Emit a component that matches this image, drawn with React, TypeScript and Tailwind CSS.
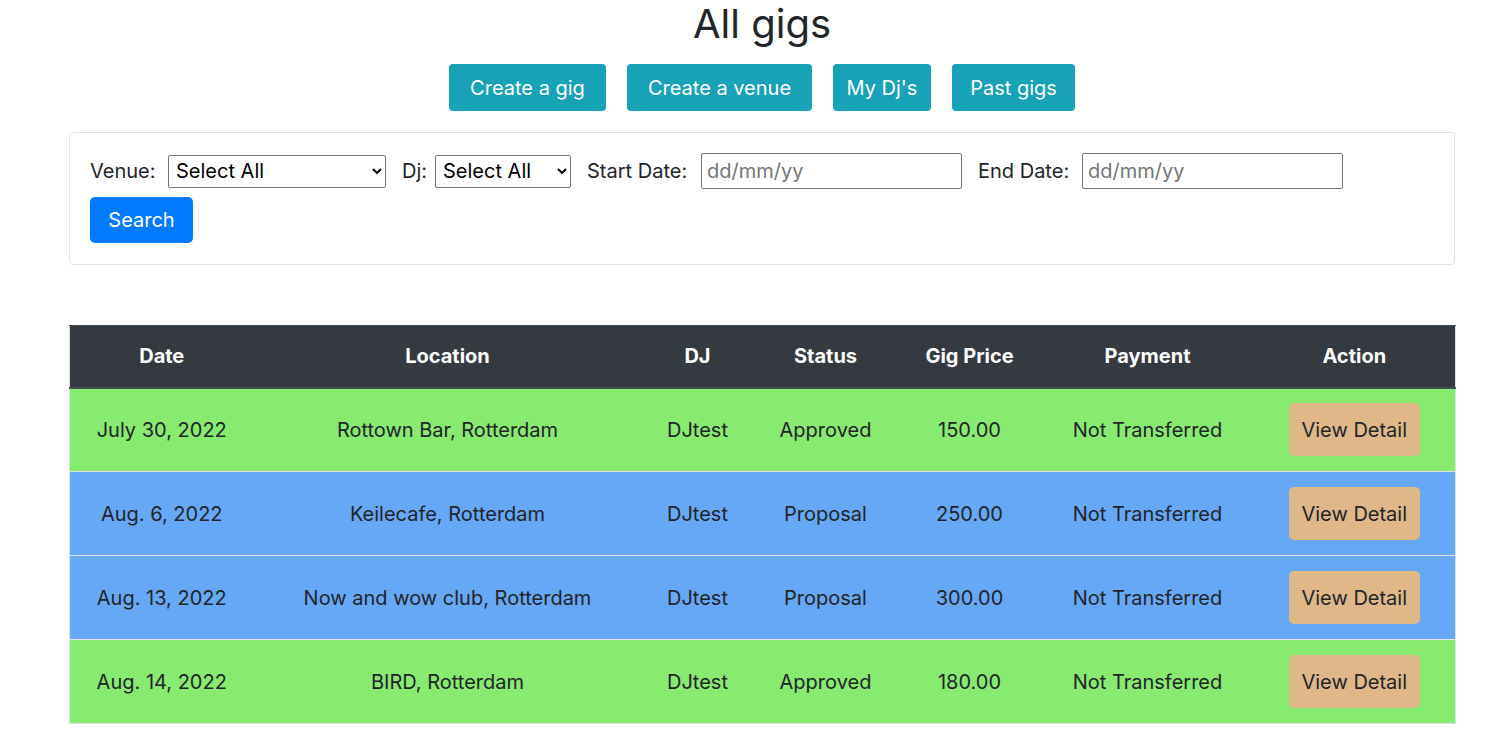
import React from "react";

type Gig = {
  date: string;
  location: string;
  dj: string;
  status: "Approved" | "Proposal";
  price: string;
  payment: string;
};

const gigs: Gig[] = [
  { date: "July 30, 2022", location: "Rottown Bar, Rotterdam", dj: "DJtest", status: "Approved", price: "150.00", payment: "Not Transferred" },
  { date: "Aug. 6, 2022", location: "Keilecafe, Rotterdam", dj: "DJtest", status: "Proposal", price: "250.00", payment: "Not Transferred" },
  { date: "Aug. 13, 2022", location: "Now and wow club, Rotterdam", dj: "DJtest", status: "Proposal", price: "300.00", payment: "Not Transferred" },
  { date: "Aug. 14, 2022", location: "BIRD, Rotterdam", dj: "DJtest", status: "Approved", price: "180.00", payment: "Not Transferred" },
];

const columns = [
  { name: "Date", width: "w-[184px]" },
  { name: "Location", width: "w-[388px]" },
  { name: "DJ", width: "w-[112px]" },
  { name: "Status", width: "w-[144px]" },
  { name: "Gig Price", width: "w-[144px]" },
  { name: "Payment", width: "w-[212px]" },
  { name: "Action", width: "w-[202px]" },
];

const topButtons = [
  { label: "Create a gig", width: "w-[157px]" },
  { label: "Create a venue", width: "w-[185px]" },
  { label: "My Dj's", width: "w-[98px]" },
  { label: "Past gigs", width: "w-[123px]" },
];

const GigRow: React.FC<{ gig: Gig }> = ({ gig }) => {
  const bg = gig.status === "Approved" ? "bg-[#87eb6f]" : "bg-[#65a8f5]";
  return (
    <tr className={`${bg} h-[84px] border-t border-[#dee2e6]`}>
      <td className="text-center">{gig.date}</td>
      <td className="text-center">{gig.location}</td>
      <td className="text-center">{gig.dj}</td>
      <td className="text-center">{gig.status}</td>
      <td className="text-center">{gig.price}</td>
      <td className="text-center">{gig.payment}</td>
      <td className="text-center">
        <button className="w-[131px] h-[53px] rounded-[5px] bg-[#deb887] text-[#212529] text-[20px]">
          View Detail
        </button>
      </td>
    </tr>
  );
};

export default function App() {
  return (
    <div className="min-h-screen bg-white text-[#212529] font-['Inter',sans-serif] text-[20px]">
      <div className="ml-[69px] w-[1386px]">
        <h1 className="text-center text-[40px] leading-[48px] font-normal">All gigs</h1>

        <div className="mt-[16px] flex justify-center gap-[21px]">
          {topButtons.map((b) => (
            <button
              key={b.label}
              className={`${b.width} h-[47px] rounded-[4px] bg-[#17a2b8] text-white text-[20px]`}
            >
              {b.label}
            </button>
          ))}
        </div>

        <div className="mt-[21px] h-[133px] rounded-[4px] border border-[#e0e0e0] px-[20px] pt-[19px]">
          <div className="flex items-center h-[38px]">
            <label className="w-[78px]">Venue:</label>
            <select className="w-[218px] h-[33px] border border-[#767676] rounded-[2px] pl-[3px] text-[20px] text-black">
              <option>Select All</option>
            </select>
            <label className="ml-[16px] w-[33px]">Dj:</label>
            <select className="w-[136px] h-[33px] border border-[#767676] rounded-[2px] pl-[3px] text-[20px] text-black">
              <option>Select All</option>
            </select>
            <label className="ml-[16px] w-[114px]">Start Date:</label>
            <input
              placeholder="dd/mm/yy"
              className="w-[261px] h-[36px] border border-[#767676] rounded-[2px] px-[5px] text-[20px] placeholder:text-[#757575]"
            />
            <label className="ml-[16px] w-[104px]">End Date:</label>
            <input
              placeholder="dd/mm/yy"
              className="w-[261px] h-[36px] border border-[#767676] rounded-[2px] px-[5px] text-[20px] placeholder:text-[#757575]"
            />
          </div>
          <button className="mt-[7px] w-[103px] h-[46px] rounded-[5px] bg-[#007bff] text-white text-[20px]">
            Search
          </button>
        </div>

        <table className="mt-[60px] w-[1386px] table-fixed border-collapse border-x border-b border-[#dee2e6]">
          <thead>
            <tr className="h-[62px] bg-[#343a40] border-t border-[#454d55]">
              {columns.map((c) => (
                <th
                  key={c.name}
                  className={`${c.width} text-center font-bold text-white border-b-2 border-[#454d55]`}
                >
                  {c.name}
                </th>
              ))}
            </tr>
          </thead>
          <tbody>
            {gigs.map((g) => (
              <GigRow key={g.date} gig={g} />
            ))}
          </tbody>
        </table>
      </div>
    </div>
  );
}
